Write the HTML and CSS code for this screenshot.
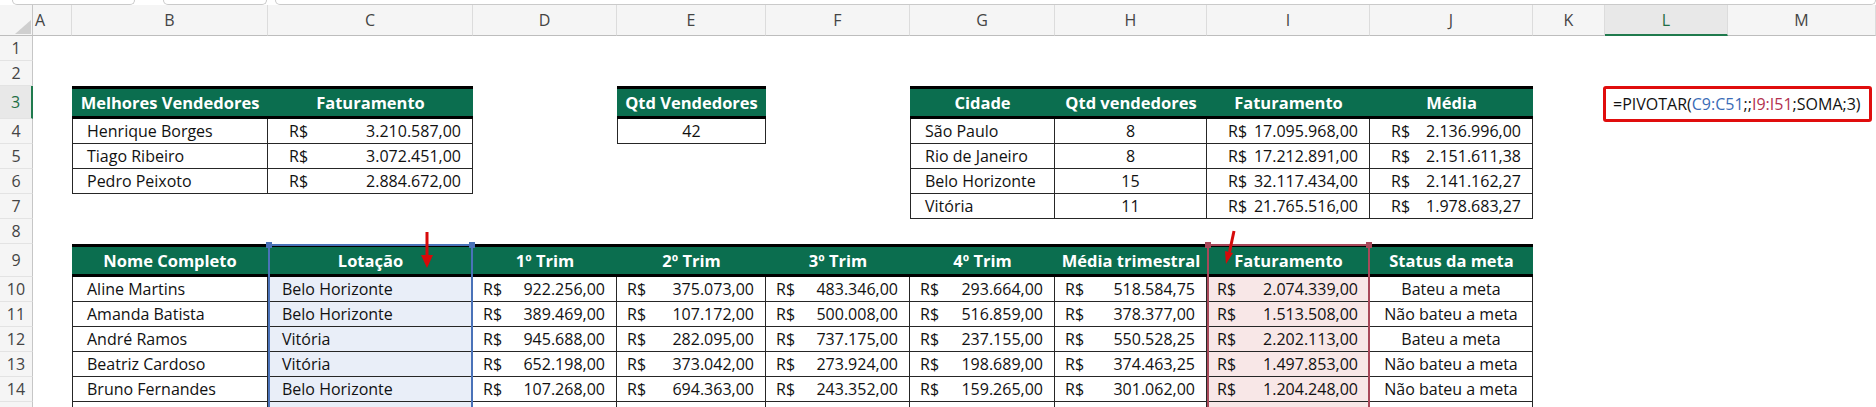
FILE: index.html
```html
<!DOCTYPE html>
<html lang="pt-BR">
<head>
    <meta charset="UTF-8">
    <title>Pivotar</title>
    <link rel="stylesheet" href="styles.css">
</head>
<body>

<div class="topbar">
    <div class="tb-box name"></div>
    <div class="tb-box fx"></div>
    <div class="tb-box bar"></div>
</div>

<div class="sheet">
    <!-- column headers -->
    <div class="corner">
        <svg width="33" height="31" viewBox="0 0 33 31"><polygon points="15,29 31,29 31,15" fill="#cfcfcf"/></svg>
    </div>
    <div class="colhead col-a">A</div>
    <div class="colhead">B</div>
    <div class="colhead">C</div>
    <div class="colhead">D</div>
    <div class="colhead">E</div>
    <div class="colhead">F</div>
    <div class="colhead">G</div>
    <div class="colhead">H</div>
    <div class="colhead">I</div>
    <div class="colhead">J</div>
    <div class="colhead">K</div>
    <div class="colhead active">L</div>
    <div class="colhead">M</div>

    <!-- row headers -->
    <div class="rowhead">1</div>
    <div class="rowhead">2</div>
    <div class="rowhead active">3</div>
    <div class="rowhead">4</div>
    <div class="rowhead">5</div>
    <div class="rowhead">6</div>
    <div class="rowhead">7</div>
    <div class="rowhead">8</div>
    <div class="rowhead">9</div>
    <div class="rowhead">10</div>
    <div class="rowhead">11</div>
    <div class="rowhead">12</div>
    <div class="rowhead">13</div>
    <div class="rowhead">14</div>
    <div class="rowhead"></div>

    <!-- Melhores vendedores -->
    <div class="tbl t-best">
        <div class="th">Melhores Vendedores</div>
        <div class="th">Faturamento</div>

        <div class="td l txt">Henrique Borges</div>
        <div class="td money wide"><span>R$</span><span>3.210.587,00</span></div>
        <div class="td l txt">Tiago Ribeiro</div>
        <div class="td money wide"><span>R$</span><span>3.072.451,00</span></div>
        <div class="td l txt">Pedro Peixoto</div>
        <div class="td money wide"><span>R$</span><span>2.884.672,00</span></div>
    </div>

    <!-- Qtd vendedores -->
    <div class="tbl t-qtd">
        <div class="th">Qtd Vendedores</div>
        <div class="td l center">42</div>
    </div>

    <!-- Resumo por cidade -->
    <div class="tbl t-city">
        <div class="th">Cidade</div>
        <div class="th">Qtd vendedores</div>
        <div class="th">Faturamento</div>
        <div class="th">Média</div>

        <div class="td l txt">São Paulo</div>
        <div class="td center">8</div>
        <div class="td money wide"><span>R$</span><span>17.095.968,00</span></div>
        <div class="td money wide"><span>R$</span><span>2.136.996,00</span></div>

        <div class="td l txt">Rio de Janeiro</div>
        <div class="td center">8</div>
        <div class="td money wide"><span>R$</span><span>17.212.891,00</span></div>
        <div class="td money wide"><span>R$</span><span>2.151.611,38</span></div>

        <div class="td l txt">Belo Horizonte</div>
        <div class="td center">15</div>
        <div class="td money wide"><span>R$</span><span>32.117.434,00</span></div>
        <div class="td money wide"><span>R$</span><span>2.141.162,27</span></div>

        <div class="td l txt">Vitória</div>
        <div class="td center">11</div>
        <div class="td money wide"><span>R$</span><span>21.765.516,00</span></div>
        <div class="td money wide"><span>R$</span><span>1.978.683,27</span></div>
    </div>

    <!-- Base de vendedores -->
    <div class="tbl t-main">
        <div class="th">Nome Completo</div>
        <div class="th">Lotação</div>
        <div class="th">1º Trim</div>
        <div class="th">2º Trim</div>
        <div class="th">3º Trim</div>
        <div class="th">4º Trim</div>
        <div class="th">Média trimestral</div>
        <div class="th">Faturamento</div>
        <div class="th">Status da meta</div>

        <div class="td l txt">Aline Martins</div>
        <div class="td txt ref-blue">Belo Horizonte</div>
        <div class="td money"><span>R$</span><span>922.256,00</span></div>
        <div class="td money"><span>R$</span><span>375.073,00</span></div>
        <div class="td money"><span>R$</span><span>483.346,00</span></div>
        <div class="td money"><span>R$</span><span>293.664,00</span></div>
        <div class="td money"><span>R$</span><span>518.584,75</span></div>
        <div class="td money ref-red"><span>R$</span><span>2.074.339,00</span></div>
        <div class="td center">Bateu a meta</div>

        <div class="td l txt">Amanda Batista</div>
        <div class="td txt ref-blue">Belo Horizonte</div>
        <div class="td money"><span>R$</span><span>389.469,00</span></div>
        <div class="td money"><span>R$</span><span>107.172,00</span></div>
        <div class="td money"><span>R$</span><span>500.008,00</span></div>
        <div class="td money"><span>R$</span><span>516.859,00</span></div>
        <div class="td money"><span>R$</span><span>378.377,00</span></div>
        <div class="td money ref-red"><span>R$</span><span>1.513.508,00</span></div>
        <div class="td center">Não bateu a meta</div>

        <div class="td l txt">André Ramos</div>
        <div class="td txt ref-blue">Vitória</div>
        <div class="td money"><span>R$</span><span>945.688,00</span></div>
        <div class="td money"><span>R$</span><span>282.095,00</span></div>
        <div class="td money"><span>R$</span><span>737.175,00</span></div>
        <div class="td money"><span>R$</span><span>237.155,00</span></div>
        <div class="td money"><span>R$</span><span>550.528,25</span></div>
        <div class="td money ref-red"><span>R$</span><span>2.202.113,00</span></div>
        <div class="td center">Bateu a meta</div>

        <div class="td l txt">Beatriz Cardoso</div>
        <div class="td txt ref-blue">Vitória</div>
        <div class="td money"><span>R$</span><span>652.198,00</span></div>
        <div class="td money"><span>R$</span><span>373.042,00</span></div>
        <div class="td money"><span>R$</span><span>273.924,00</span></div>
        <div class="td money"><span>R$</span><span>198.689,00</span></div>
        <div class="td money"><span>R$</span><span>374.463,25</span></div>
        <div class="td money ref-red"><span>R$</span><span>1.497.853,00</span></div>
        <div class="td center">Não bateu a meta</div>

        <div class="td l txt">Bruno Fernandes</div>
        <div class="td txt ref-blue">Belo Horizonte</div>
        <div class="td money"><span>R$</span><span>107.268,00</span></div>
        <div class="td money"><span>R$</span><span>694.363,00</span></div>
        <div class="td money"><span>R$</span><span>243.352,00</span></div>
        <div class="td money"><span>R$</span><span>159.265,00</span></div>
        <div class="td money"><span>R$</span><span>301.062,00</span></div>
        <div class="td money ref-red"><span>R$</span><span>1.204.248,00</span></div>
        <div class="td center">Não bateu a meta</div>

        <div class="td l"></div>
        <div class="td ref-blue"></div>
        <div class="td"></div>
        <div class="td"></div>
        <div class="td"></div>
        <div class="td"></div>
        <div class="td"></div>
        <div class="td ref-red"></div>
        <div class="td"></div>
    </div>

    <!-- formula reference highlights -->
    <div class="ref-range blue"></div>
    <div class="ref-range red"></div>

    <!-- formula typed in L3 -->
    <div class="formula">=PIVOTAR(<span class="f-blue">C9:C51</span>;;<span class="f-red">I9:I51</span>;SOMA;3)</div>
</div>

<svg class="marks" width="1876" height="407" viewBox="0 0 1876 407">
    <line x1="427" y1="232" x2="427" y2="257" stroke="#d60a0a" stroke-width="3"/>
    <polygon points="421,255 433,255 427,268" fill="#d60a0a"/>
    <line x1="1234" y1="231" x2="1229.5" y2="252" stroke="#d60a0a" stroke-width="3"/>
    <polygon points="1233,253 1225,251 1226,264" fill="#d60a0a"/>
</svg>

</body>
</html>
```

FILE: styles.css
```css
* {
    margin: 0;
    padding: 0;
    box-sizing: border-box;
}

html, body {
    width: 100%;
    height: 100%;
    overflow: hidden;
    background-color: #fff;
    color: #111;
    font-family: "Open Sans", "Noto Sans", Arial, sans-serif;
    font-size: 16px;
}

body {
    position: relative;
}

/* remains of the formula bar above the grid */
.topbar {
    height: 5px;
    display: flex;
    gap: 8px;
    padding-left: 12px;
}

.tb-box {
    height: 5px;
    border: 1px solid #cacaca;
    border-top: none;
    border-radius: 0 0 6px 6px;
}

.tb-box.name { width: 123px; margin-right: 20px; }
.tb-box.fx { width: 104px; }
.tb-box.bar { flex: 1; }

.sheet {
    display: grid;
    grid-template-columns: 33px 39px 196px 205px 144px 149px 144px 145px 152px 163px 163px 72px 123px 1fr;
    grid-template-rows: 31px 25px 25px 33px 25px 25px 25px 25px 25px 33px 25px 25px 25px 25px 25px 25px;
}

.corner {
    grid-row: 1;
    grid-column: 1;
    background-color: #f5f5f5;
    border-right: 1px solid #c6c6c6;
    border-bottom: 1px solid #bdbdbd;
}

.corner svg {
    display: block;
}

.colhead {
    grid-row: 1;
    display: flex;
    align-items: center;
    justify-content: center;
    background-color: #f5f5f5;
    border-right: 1px solid #dcdcdc;
    border-bottom: 1px solid #bdbdbd;
    color: #444;
    font-size: 16px;
}

.colhead.col-a {
    justify-content: flex-start;
    padding-left: 2px;
}

.colhead.active {
    background-color: #e8e8e8;
    border-bottom: 2px solid #1f7a4d;
    color: #1f6e45;
}

.rowhead {
    grid-column: 1;
    display: flex;
    align-items: center;
    justify-content: center;
    background-color: #f5f5f5;
    border-right: 1px solid #c6c6c6;
    border-bottom: 1px solid #e3e3e3;
    color: #444;
    font-size: 16px;
}

.rowhead.active {
    background-color: #e8e8e8;
    border-right: 2px solid #1f7a4d;
    color: #1f6e45;
}

/* tables */
.tbl {
    display: grid;
}

.t-best {
    grid-column: 3 / 5;
    grid-row: 4 / 8;
    grid-template-columns: 196px 205px;
    grid-template-rows: 33px repeat(3, 25px);
}

.t-qtd {
    grid-column: 6;
    grid-row: 4 / 6;
    grid-template-columns: 149px;
    grid-template-rows: 33px 25px;
}

.t-city {
    grid-column: 8 / 12;
    grid-row: 4 / 9;
    grid-template-columns: 145px 152px 163px 163px;
    grid-template-rows: 33px repeat(4, 25px);
}

.t-main {
    grid-column: 3 / 12;
    grid-row: 10 / 17;
    grid-template-columns: 196px 205px 144px 149px 144px 145px 152px 163px 163px;
    grid-template-rows: 33px repeat(6, 25px);
}

.th {
    display: flex;
    align-items: center;
    justify-content: center;
    background-color: #0b6e4f;
    border-top: 3px solid #000;
    border-bottom: 3px solid #000;
    color: #fff;
    font-weight: 700;
    font-size: 16.5px;
    white-space: nowrap;
}

.td {
    display: flex;
    align-items: center;
    border-right: 1px solid #262626;
    border-bottom: 1px solid #262626;
    white-space: nowrap;
    overflow: hidden;
}

.td.l {
    border-left: 1px solid #262626;
}

.td.txt {
    padding-left: 14px;
}

.td.center {
    justify-content: center;
}

.td.money {
    justify-content: space-between;
    padding: 0 11px 0 10px;
}

.td.money.wide {
    padding-left: 21px;
}

.td.ref-blue {
    background-color: #e9eef8;
}

.td.ref-red {
    background-color: #f8e7e7;
}

/* range outlines drawn by the formula being edited */
.ref-range {
    grid-row: 10 / 17;
    position: relative;
    border: 2px solid;
    border-bottom: none;
    pointer-events: none;
}

.ref-range.blue {
    grid-column: 4;
    border-color: #4a72b8;
}

.ref-range.red {
    grid-column: 10;
    border-color: #a8485a;
}

.ref-range::before,
.ref-range::after {
    content: "";
    position: absolute;
    top: -4px;
    width: 6px;
    height: 6px;
}

.ref-range.blue::before,
.ref-range.blue::after {
    background-color: #4a72b8;
}

.ref-range.red::before,
.ref-range.red::after {
    background-color: #a8485a;
}

.ref-range::before { left: -4px; }
.ref-range::after { right: -4px; }

.formula {
    grid-column: 13 / 15;
    grid-row: 4;
    margin: 0 4px -3px -2px;
    display: flex;
    align-items: center;
    padding-left: 7px;
    border: 3px solid #e00d0d;
    border-radius: 3px;
    color: #111;
    font-size: 16px;
    white-space: nowrap;
}

.f-blue { color: #3b6cb7; }
.f-red { color: #b3314f; }

.marks {
    position: absolute;
    top: 0;
    left: 0;
    pointer-events: none;
}
```
